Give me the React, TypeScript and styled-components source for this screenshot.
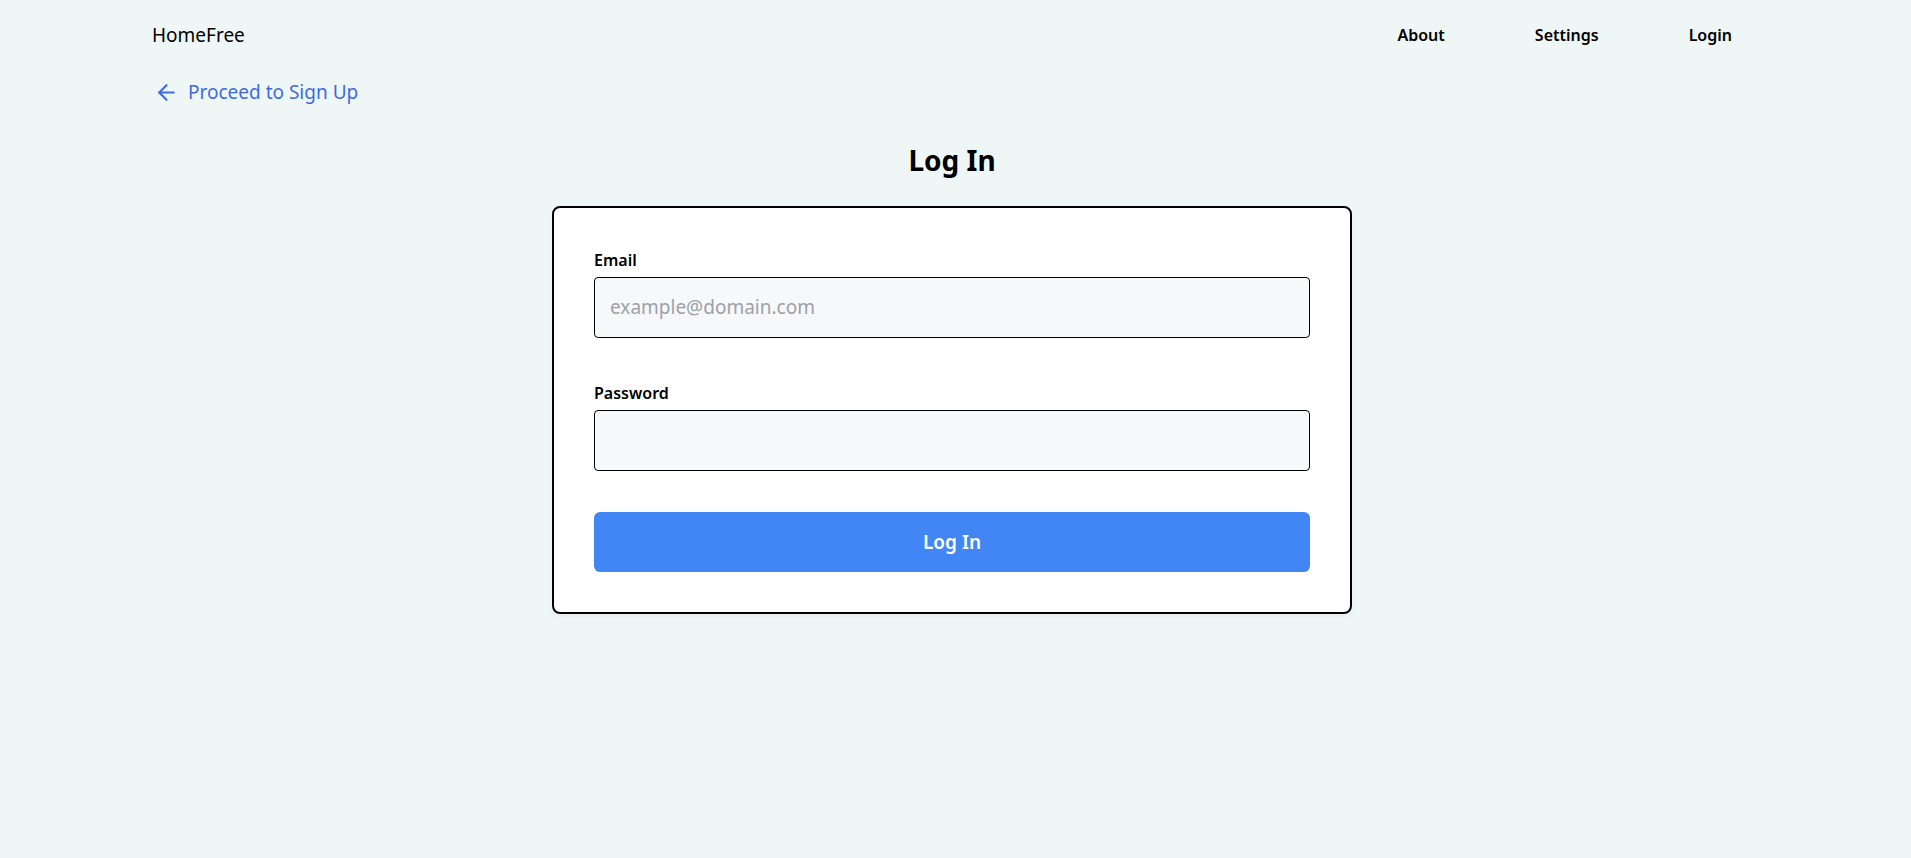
import React from 'react';
import styled, { createGlobalStyle } from 'styled-components';
import { ArrowLeft } from 'lucide-react';

const GlobalStyle = createGlobalStyle`
    html, body {
        margin: 0;
        padding: 0;
        background: #eff7f6;
        font-family: 'Noto Sans', 'Open Sans', sans-serif;
        color: #000;
    }
    * {
        box-sizing: border-box;
    }
`;

const Page = styled.div`
    min-height: 100vh;
    display: flex;
    flex-direction: column;
`;

const Header = styled.header`
    display: flex;
    align-items: center;
    justify-content: space-between;
    padding: 18px 179px 0 152px;
    height: 52px;
`;

const Brand = styled.div`
    font-size: 19px;
    line-height: 28px;
`;

const Nav = styled.nav`
    display: flex;
    gap: 90px;
`;

const NavLink = styled.a`
    font-size: 16px;
    font-weight: 600;
    line-height: 24px;
    color: #000;
    text-decoration: none;
    cursor: pointer;
`;

const BackRow = styled.div`
    padding: 27px 0 0 154px;
`;

const BackLink = styled.a`
    display: inline-flex;
    align-items: center;
    gap: 9px;
    color: #3e6ae1;
    font-size: 19px;
    line-height: 26px;
    text-decoration: none;
    cursor: pointer;
`;

const Main = styled.main`
    display: flex;
    flex-direction: column;
    align-items: center;
    padding-right: 7px;
`;

const Title = styled.h1`
    margin: 32px 0 28px;
    font-size: 28px;
    font-weight: 700;
    line-height: 36px;
`;

const Card = styled.form`
    width: 800px;
    background: #fff;
    border: 2px solid #000;
    border-radius: 8px;
    padding: 40px;
    display: flex;
    flex-direction: column;
    box-shadow: 0 4px 8px rgba(0, 0, 0, 0.04);
`;

const Field = styled.div<{ $gap: number }>`
    display: flex;
    flex-direction: column;
    margin-bottom: ${(p) => p.$gap}px;
`;

const Label = styled.label`
    font-size: 16px;
    font-weight: 600;
    line-height: 24px;
    margin-bottom: 5px;
`;

const Input = styled.input`
    height: 61px;
    border: 1px solid #000;
    border-radius: 4px;
    background: #f6f8f9;
    padding: 0 15px;
    font-family: inherit;
    font-size: 19px;
    color: #000;
    outline: none;

    &::placeholder {
        color: #9ca1a8;
    }
`;

const SubmitButton = styled.button`
    height: 60px;
    border: none;
    border-radius: 6px;
    background: #4285f4;
    color: #fff;
    font-family: inherit;
    font-size: 19px;
    font-weight: 600;
    cursor: pointer;
`;

export default function App() {
    return (
        <Page>
            <GlobalStyle />
            <Header>
                <Brand>HomeFree</Brand>
                <Nav>
                    <NavLink>About</NavLink>
                    <NavLink>Settings</NavLink>
                    <NavLink>Login</NavLink>
                </Nav>
            </Header>
            <BackRow>
                <BackLink>
                    <ArrowLeft size={25} strokeWidth={2} />
                    Proceed to Sign Up
                </BackLink>
            </BackRow>
            <Main>
                <Title>Log In</Title>
                <Card onSubmit={(e) => e.preventDefault()}>
                    <Field $gap={43}>
                        <Label htmlFor="email">Email</Label>
                        <Input id="email" type="email" placeholder="example@domain.com" />
                    </Field>
                    <Field $gap={41}>
                        <Label htmlFor="password">Password</Label>
                        <Input id="password" type="password" />
                    </Field>
                    <SubmitButton type="submit">Log In</SubmitButton>
                </Card>
            </Main>
        </Page>
    );
}
